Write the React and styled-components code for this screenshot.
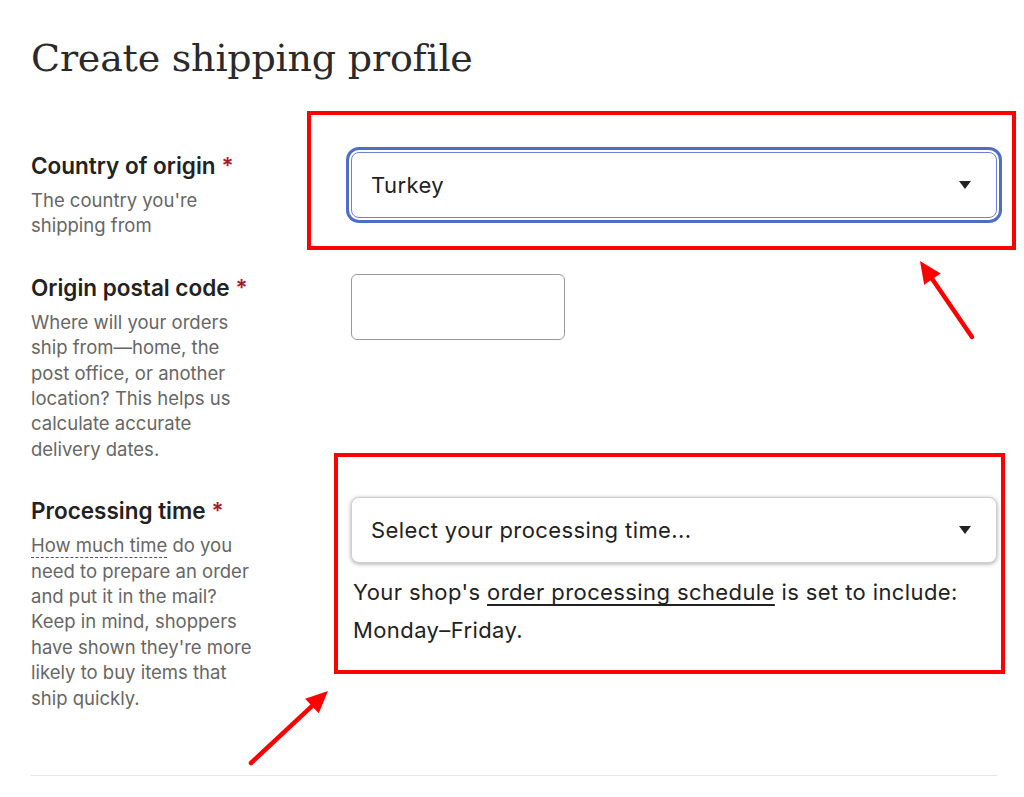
import React from 'react';
import styled, { createGlobalStyle } from 'styled-components';

const GlobalStyle = createGlobalStyle`
  body {
    margin: 0;
    background: #fff;
    font-family: Inter, 'Liberation Sans', sans-serif;
    color: #222;
  }
`;

const Page = styled.div`
  position: relative;
  width: 1024px;
  height: 797px;
  padding: 0 27px 0 31px;
  box-sizing: border-box;
  overflow: hidden;
`;

const Title = styled.h1`
  margin: 32px 0 68px;
  font-family: 'DejaVu Serif', 'Liberation Serif', serif;
  font-weight: 400;
  font-size: 38px;
  line-height: 52px;
  letter-spacing: -0.2px;
  color: #2a2a2a;
`;

const Form = styled.div`
  display: flex;
  flex-direction: column;
  gap: 35px;
`;

const Row = styled.div`
  display: grid;
  grid-template-columns: 230px 1fr;
  column-gap: 90px;
  align-items: start;
`;

const LabelCol = styled.div`
  display: flex;
  flex-direction: column;
  gap: 8px;
`;

const Label = styled.div`
  font-size: 22.5px;
  line-height: 28px;
  font-weight: 600;
  color: #222;
`;

const Star = styled.span`
  color: #a61a2e;
  margin-left: 6px;
`;

const Help = styled.div`
  font-size: 18.5px;
  line-height: 25.4px;
  color: #666;
`;

const Dashed = styled.span`
  text-decoration: underline dashed #555;
  text-underline-offset: 5px;
  text-decoration-thickness: 1px;
`;

const Field = styled.div`
  display: flex;
  flex-direction: column;
`;

const SelectBox = styled.div`
  height: 66px;
  box-sizing: border-box;
  display: flex;
  align-items: center;
  justify-content: space-between;
  padding: 0 24px 0 19px;
  border-radius: 8px;
  font-size: 22px;
  letter-spacing: 0.4px;
  color: #222;
  background: #fff;
  border: 1px solid ${(p) => (p.$focused ? '#6a84d3' : '#d0d0d0')};
  box-shadow: ${(p) =>
    p.$focused
      ? '0 0 0 2px #fff, 0 0 0 5px #4f6cc8'
      : '0 1px 4px rgba(0, 0, 0, 0.35)'};
`;

const TextInput = styled.div`
  width: 214px;
  height: 66px;
  box-sizing: border-box;
  border: 1px solid #999;
  border-radius: 6px;
  background: #fff;
`;

const Note = styled.p`
  margin: 10px 0 0 2px;
  font-size: 22px;
  letter-spacing: 0.4px;
  line-height: 38px;
  color: #222;
`;

const Link = styled.span`
  text-decoration: underline;
  text-underline-offset: 4px;
`;

const Divider = styled.hr`
  margin: 64px 0 0;
  border: none;
  border-top: 1px solid #e6e6e6;
`;

const Highlight = styled.div`
  position: absolute;
  left: ${(p) => p.$x}px;
  top: ${(p) => p.$y}px;
  width: ${(p) => p.$w}px;
  height: ${(p) => p.$h}px;
  box-sizing: border-box;
  border: 4px solid #ff0000;
  pointer-events: none;
`;

const ArrowSvg = styled.svg`
  position: absolute;
  left: 0;
  top: 0;
  pointer-events: none;
`;

const Caret = () => (
  <svg width="14" height="10" viewBox="0 0 14 10">
    <path d="M1 1h12L7 9z" fill="#222" />
  </svg>
);

const Arrow = ({ x1, y1, x2, y2 }) => {
  const a = Math.atan2(y2 - y1, x2 - x1);
  const len = 22;
  const wid = 10;
  const bx = x2 - Math.cos(a) * len;
  const by = y2 - Math.sin(a) * len;
  const px = -Math.sin(a) * wid;
  const py = Math.cos(a) * wid;
  return (
    <g>
      <line x1={x1} y1={y1} x2={bx} y2={by} stroke="#ff0000" strokeWidth="4.5" strokeLinecap="round" />
      <polygon
        points={`${x2},${y2} ${bx + px},${by + py} ${bx - px},${by - py}`}
        fill="#ff0000"
      />
    </g>
  );
};

export default function App() {
  return (
    <>
      <GlobalStyle />
      <Page>
        <Title>Create shipping profile</Title>
        <Form>
          <Row>
            <LabelCol>
              <Label>
                Country of origin<Star>*</Star>
              </Label>
              <Help>The country you're shipping from</Help>
            </LabelCol>
            <Field>
              <SelectBox $focused>
                <span>Turkey</span>
                <Caret />
              </SelectBox>
            </Field>
          </Row>
          <Row>
            <LabelCol>
              <Label>
                Origin postal code<Star>*</Star>
              </Label>
              <Help>
                Where will your orders ship from—home, the post office, or
                another location? This helps us calculate accurate delivery
                dates.
              </Help>
            </LabelCol>
            <Field>
              <TextInput />
            </Field>
          </Row>
          <Row>
            <LabelCol>
              <Label>
                Processing time<Star>*</Star>
              </Label>
              <Help>
                <Dashed>How much time</Dashed> do you need to prepare an order
                and put it in the mail? Keep in mind, shoppers have shown
                they're more likely to buy items that ship quickly.
              </Help>
            </LabelCol>
            <Field>
              <SelectBox>
                <span>Select your processing time...</span>
                <Caret />
              </SelectBox>
              <Note>
                Your shop's <Link>order processing schedule</Link> is set to
                include: Monday–Friday.
              </Note>
            </Field>
          </Row>
        </Form>
        <Divider />

        <Highlight $x={307} $y={111} $w={709} $h={139} />
        <Highlight $x={334} $y={453} $w={671} $h={221} />
        <ArrowSvg width="1024" height="797">
          <Arrow x1={972} y1={337} x2={920} y2={261} />
          <Arrow x1={251} y1={763} x2={328} y2={691} />
        </ArrowSvg>
      </Page>
    </>
  );
}
